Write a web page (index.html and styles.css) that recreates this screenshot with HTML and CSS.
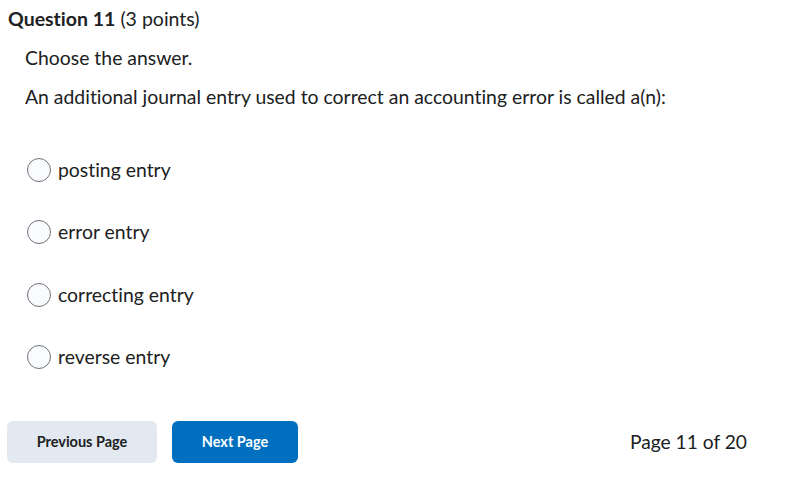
FILE: index.html
```html
<!DOCTYPE html>
<html>
<head>
<meta charset="utf-8">
<link rel="stylesheet" href="styles.css">
</head>
<body>
<div class="page">
  <h2 class="qtitle"><strong>Question 11</strong> <span class="pts">(3 points)</span></h2>
  <div class="qbody">
    <p class="instr">Choose the answer.</p>
    <p class="stem">An additional journal entry used to correct an accounting error is called a(n):</p>
    <div class="options">
      <label class="opt"><span class="radio"></span>posting entry</label>
      <label class="opt"><span class="radio"></span>error entry</label>
      <label class="opt"><span class="radio"></span>correcting entry</label>
      <label class="opt"><span class="radio"></span>reverse entry</label>
    </div>
  </div>
  <div class="footer">
    <div class="btns">
      <button class="btn prev">Previous Page</button>
      <button class="btn next">Next Page</button>
    </div>
    <div class="pageno">Page 11 of 20</div>
  </div>
</div>
</body>
</html>
```
FILE: styles.css
```css
html, body {
  margin: 0;
  padding: 0;
  background: #fff;
}
body {
  font-family: Lato, "Noto Sans", sans-serif;
  color: #202122;
  font-variant-ligatures: none;
}
.page {
  width: 799px;
  height: 494px;
  box-sizing: border-box;
  padding: 8px 52px 0 8px;
  display: flex;
  flex-direction: column;
}
.qtitle {
  margin: 0;
  font-size: 19.5px;
  font-weight: 400;
  line-height: 22px;
}
.qtitle strong {
  font-weight: 700;
}
.qbody {
  padding-left: 17px;
}
.instr, .stem {
  margin: 0;
  font-size: 19.4px;
  line-height: 24px;
}
.instr {
  margin-top: 16px;
}
.stem {
  margin-top: 15px;
}
.options {
  margin-top: 49px;
  display: flex;
  flex-direction: column;
  gap: 38.3px;
  margin-left: 2px;
}
.opt {
  display: flex;
  align-items: center;
  height: 24px;
  font-size: 19.4px;
  line-height: 24px;
  gap: 7px;
}
.radio {
  border: 1px solid #6e7376;
  border-radius: 50%;
  background: #f9fbff;
  box-sizing: border-box;
  width: 24px;
  height: 24px;
}
.footer {
  margin-top: 52px;
  display: flex;
  justify-content: space-between;
  align-items: center;
}
.btns {
  display: flex;
  gap: 15px;
  margin-left: -1px;
}
.btn {
  font-family: Lato, "Noto Sans", sans-serif;
  font-variant-ligatures: none;
  font-weight: 700;
  font-size: 14.5px;
  height: 42px;
  border: none;
  border-radius: 6px;
  padding: 0;
  cursor: pointer;
}
.prev {
  width: 150px;
  background: #e3e9f1;
  color: #202122;
}
.next {
  width: 126px;
  background: #006fbf;
  color: #fff;
}
.pageno {
  font-size: 19.2px;
  color: #202122;
}
```
